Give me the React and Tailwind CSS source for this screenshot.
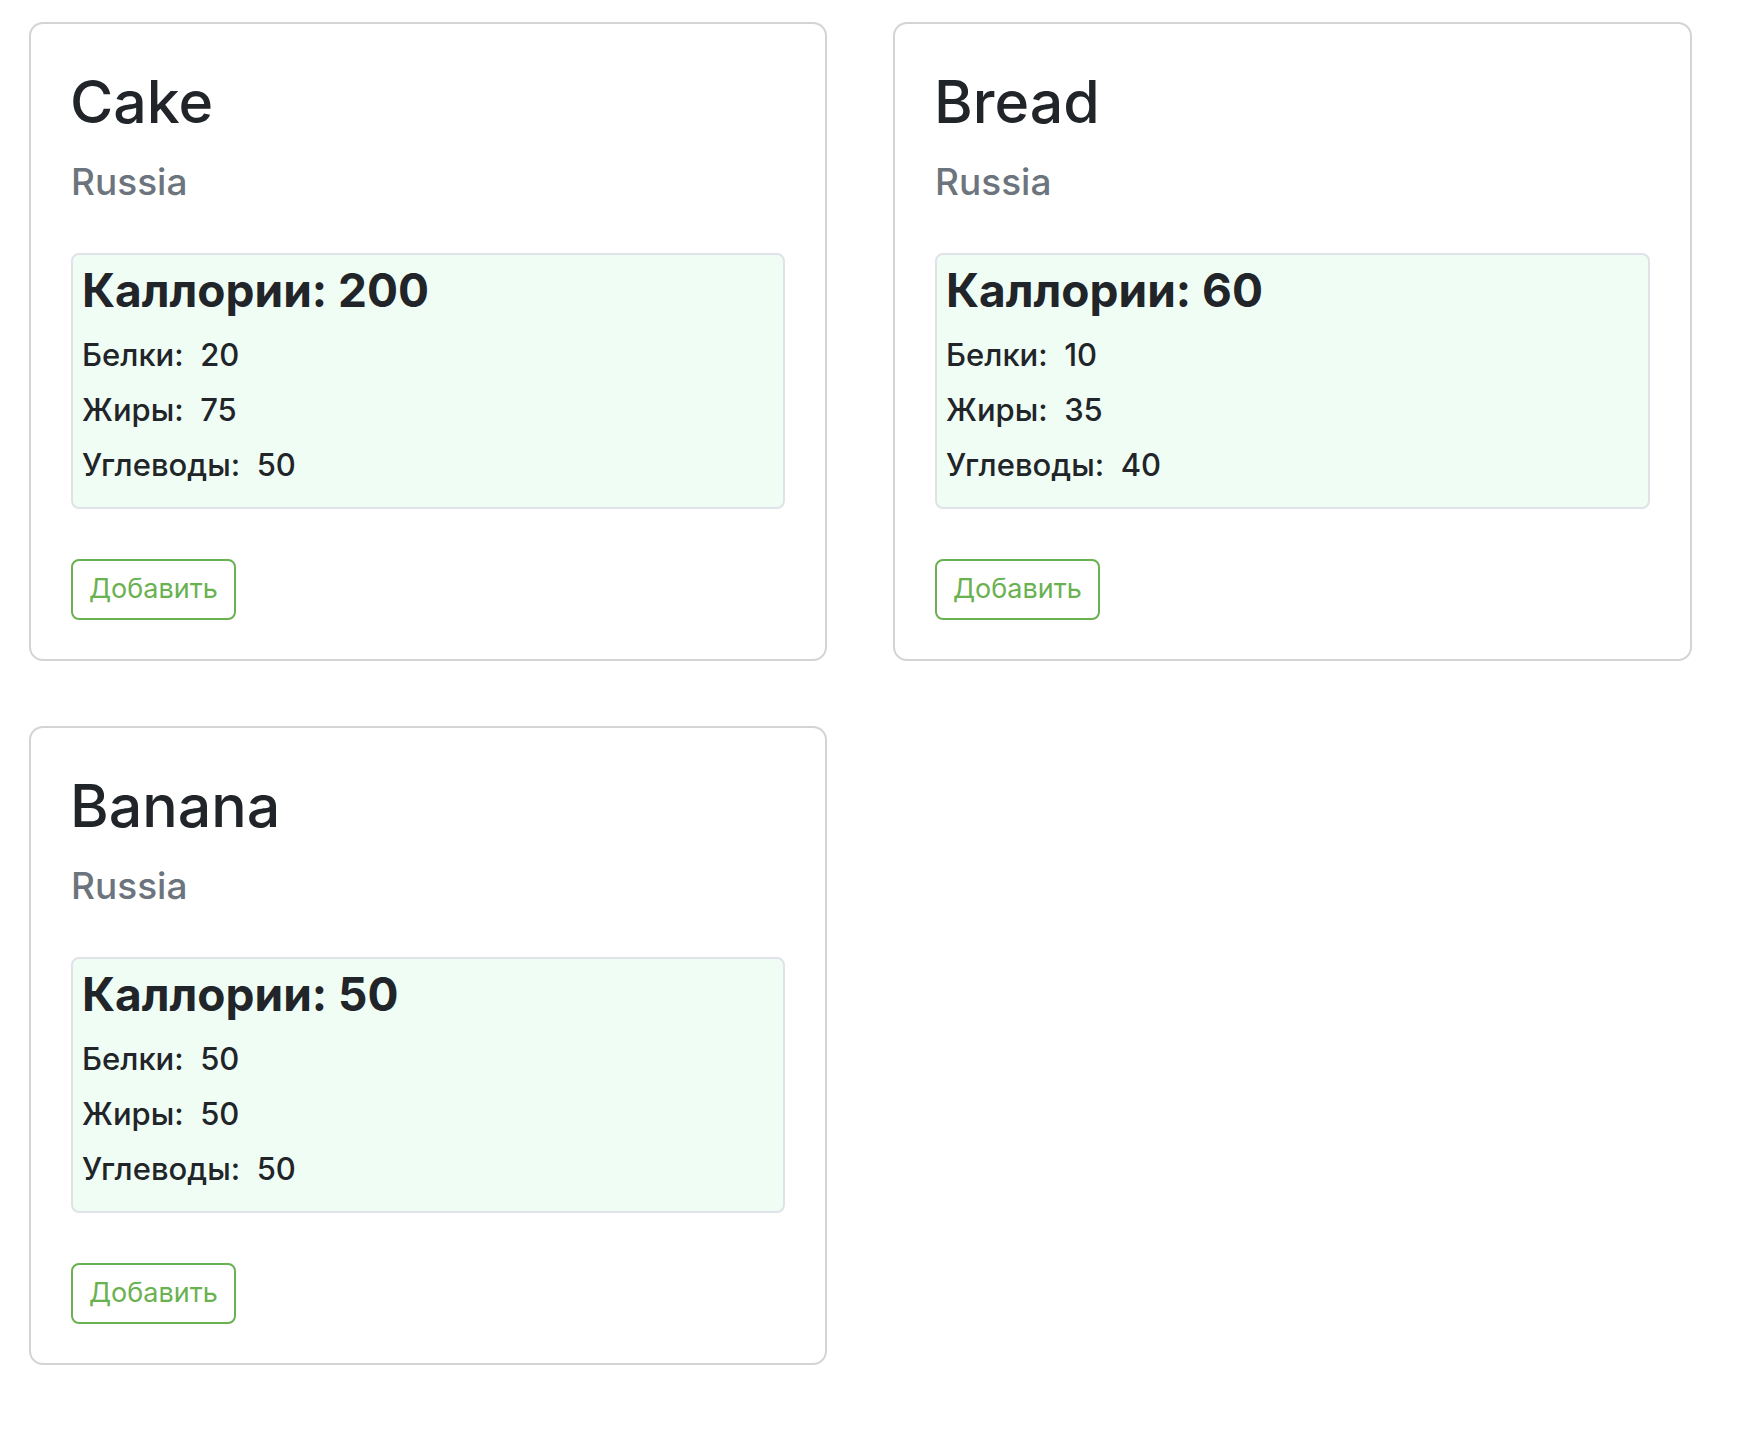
import React from 'react';

const products = [
    { id: 1, name: 'Cake', country: 'Russia', calories: 200, proteins: 20, fats: 75, carbs: 50 },
    { id: 2, name: 'Bread', country: 'Russia', calories: 60, proteins: 10, fats: 35, carbs: 40 },
    { id: 3, name: 'Banana', country: 'Russia', calories: 50, proteins: 50, fats: 50, carbs: 50 },
];

function NutrientRow({ label, value }) {
    return (
        <div className="text-[31px] leading-[55px] font-medium text-[#212529]">
            {label}:&nbsp; {value}
        </div>
    );
}

function ProductCard({ product }) {
    return (
        <div className="border-2 border-[#d4d4d4] rounded-[14px] bg-white px-[40px] pt-[43px] pb-[39px]">
            {/* Title */}
            <h2 className="text-[59px] leading-[70px] font-medium text-[#212529] -ml-[1px]">{product.name}</h2>
            <h6 className="mt-[22px] text-[37px] leading-[45px] font-medium text-[#6c757d]">{product.country}</h6>

            {/* Nutrition */}
            <div className="mt-[49px] border-2 border-[#dfe3e8] rounded-[8px] bg-[#f0fdf4] px-[9px] pt-[8px] pb-[15px]">
                <div className="text-[46px] leading-[55px] font-bold text-[#212529] mb-[9px]">
                    Каллории: {product.calories}
                </div>
                <NutrientRow label="Белки" value={product.proteins} />
                <NutrientRow label="Жиры" value={product.fats} />
                <NutrientRow label="Углеводы" value={product.carbs} />
            </div>

            <button className="mt-[50px] h-[61px] px-[16px] border-2 border-[#6ab150] rounded-[8px] text-[27px] text-[#6ab150] bg-white">
                Добавить
            </button>
        </div>
    );
}

export default function App() {
    return (
        <div className="min-h-screen bg-white" style={{ fontFamily: 'Inter, "Noto Sans", sans-serif' }}>
            <div className="grid grid-cols-[798px_799px] gap-x-[66px] gap-y-[65px] pl-[29px] pt-[22px]">
                {products.map((p) => (
                    <ProductCard key={p.id} product={p} />
                ))}
            </div>
        </div>
    );
}
